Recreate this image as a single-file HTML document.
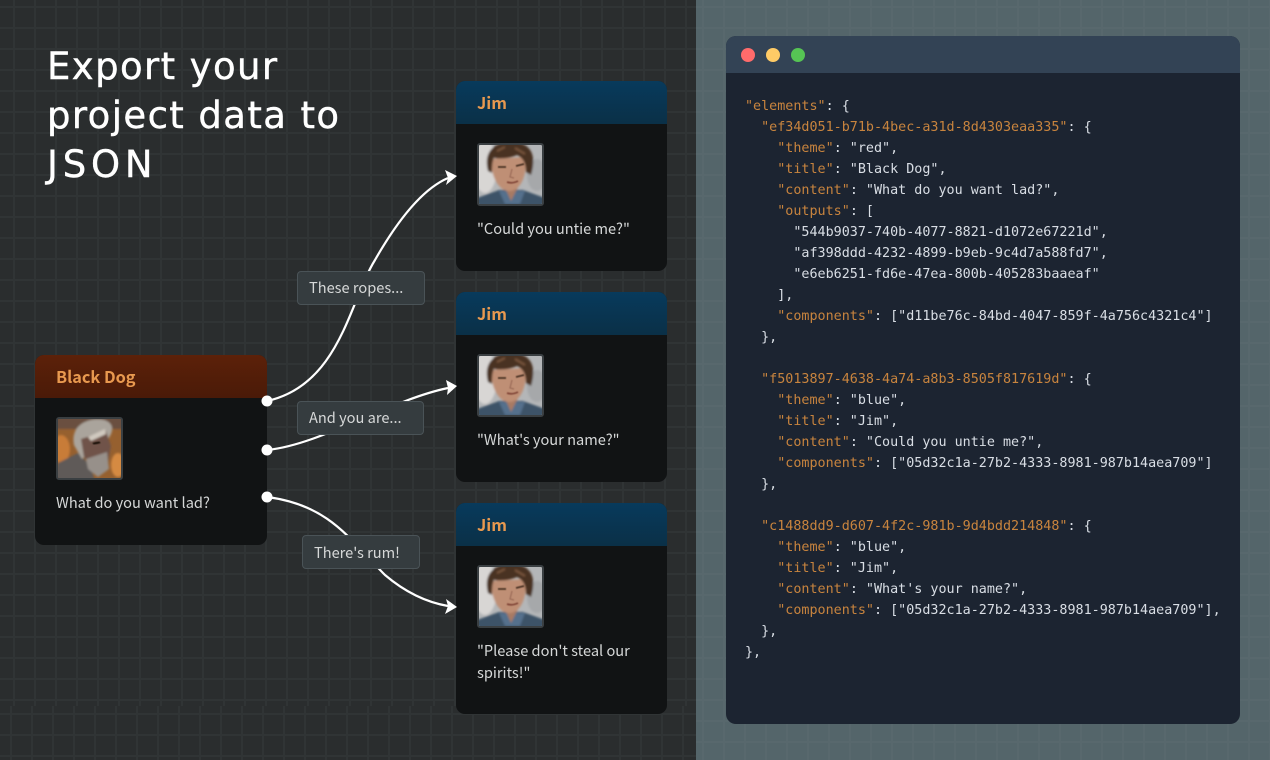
<!DOCTYPE html>
<html><head><meta charset="utf-8"><style>
*{box-sizing:border-box}
html,body{margin:0;padding:0}
body{width:1270px;height:760px;overflow:hidden;position:relative;background:#282b2c;font-family:"Noto Sans CJK SC","Liberation Sans",sans-serif}
.abs{position:absolute}
#left{left:0;top:0;width:696px;height:760px;background-color:#2a2d2e;
background-image:linear-gradient(to right,#303435 2px,transparent 2px),linear-gradient(to bottom,#303435 2px,transparent 2px);
background-size:21px 21px;background-position:13px 6px}
#left2{left:0;top:706px;width:696px;height:54px;background-color:#2a2d2e;
background-image:linear-gradient(to right,#303435 2px,transparent 2px),linear-gradient(to bottom,#303435 2px,transparent 2px);
background-size:21px 21px;background-position:10px 7px}
#right{left:696px;top:0;width:574px;height:760px;background-color:#54656a;
background-image:linear-gradient(to right,#58686d 2px,transparent 2px),linear-gradient(to bottom,#58686d 2px,transparent 2px);
background-size:21px 21px;background-position:6px 6px}
h1{position:absolute;left:47px;top:42px;margin:0;color:#fff;font:400 37px/49px "DejaVu Sans",sans-serif;letter-spacing:1.4px;-webkit-text-stroke:.4px #fff}
h1 span{letter-spacing:4.8px}
.node{position:absolute;width:211px;background:#111314;border-radius:9px;overflow:hidden}
.hd{height:43px;padding:9px 21px 0;font-size:16.3px;font-weight:700;color:#e8994f;line-height:24px}
.blue{background:linear-gradient(#083a5c,#0a3047)}
.red{background:linear-gradient(#5c2109,#4a1a08)}
.txt{position:absolute;left:21px;color:#d6d8d8;font-size:14.6px;line-height:22px}
.av{position:absolute;left:21px;width:67px;height:63px;border:2px solid #3a3f42;border-radius:3px;overflow:hidden}
.av svg{display:block}
.lbl{position:absolute;height:34px;background:#353c3f;border:1px solid #4a5357;border-radius:4px;color:#d6d8d8;font-size:14.6px;line-height:31px;padding-left:11px}
#win{left:726px;top:36px;width:514px;height:688px;background:#1c2431;border-radius:10px;overflow:hidden}
#bar{height:37px;background:#334355}
.dot{position:absolute;top:12px;width:14px;height:14px;border-radius:50%}
pre{position:absolute;left:19px;top:60px;margin:0;font:13.4px/21px "DejaVu Sans Mono","Liberation Mono",monospace;color:#d9dee5}
pre b{font-weight:400;color:#c8843e}
</style></head><body>
<div class="abs" id="left"></div>
<div class="abs" id="left2"></div>
<div class="abs" id="right"></div>
<h1>Export your<br>project data to<br><span>JSON</span></h1>

<svg width="0" height="0" style="position:absolute"><defs>
<filter id="b" x="-20%" y="-20%" width="140%" height="140%"><feGaussianBlur stdDeviation="1.1"/></filter>
<filter id="c" x="-20%" y="-20%" width="140%" height="140%"><feGaussianBlur stdDeviation=".5"/></filter>
<symbol id="jim" viewBox="0 0 63 59">
<rect width="63" height="59" fill="#b4b6b8"/>
<g filter="url(#b)">
<ellipse cx="6" cy="22" rx="12" ry="26" fill="#d8d6d4"/>
<ellipse cx="58" cy="30" rx="10" ry="16" fill="#a6a8aa"/>
<path d="M-4 63L-2 53L20 45H44L66 53V63Z" fill="#3d5267"/>
<path d="M20 46L26 59H41L46 46Z" fill="#54708c"/>
<path d="M24 38L32 56L41 38Z" fill="#a87a64"/>
<path d="M12 14C12 34 21 46 30 46C42 46 48 30 47 12Z" fill="#bf8f74"/>
<path d="M9 26C4 6 16-3 32-3C52-3 58 10 52 30L47 27C47 20 45 13 38 10C30 14 20 14 15 13C13 17 13 22 13 28Z" fill="#4a3123"/>
<path d="M18 6L26 2M36 3L46 9" stroke="#7a573d" stroke-width="2" fill="none"/>
</g>
<g filter="url(#c)">
<path d="M19 22L27 22M37 21L45 19" stroke="#4d3426" stroke-width="1.8" fill="none"/>
<path d="M28 37Q33 39 39 36" stroke="#84493a" stroke-width="1.8" fill="none"/>
<path d="M33 24L31 32L35 33" stroke="#9c6c58" stroke-width="1.2" fill="none"/>
</g></symbol>
<symbol id="dog" viewBox="0 0 63 59">
<rect width="63" height="59" fill="#96602f"/>
<g filter="url(#b)">
<ellipse cx="3" cy="30" rx="9" ry="14" fill="#c87c38"/>
<ellipse cx="60" cy="46" rx="7" ry="12" fill="#d58a42"/>
<rect x="-3" y="-3" width="70" height="13" fill="#6b5040"/>
<path d="M-3 62L0 44L20 34L32 46L37 62Z" fill="#5f5a59"/>
<path d="M16 26C12 6 30-2 46 1C56 4 56 12 50 20L24 40Z" fill="#aaa49c"/>
<path d="M23 20L48 12L53 27L50 44L36 50L26 38Z" fill="#6f5348"/>
<path d="M28 40L49 33L51 50L40 58L30 50Z" fill="#97908a"/>
<path d="M30 18L47 10L48 15L33 22Z" fill="#d0c9bf"/>
</g>
<path d="M35 25l7-2" stroke="#20150f" stroke-width="2.5" filter="url(#c)"/>
</symbol>
</defs></svg>

<div class="node" style="left:35px;top:355px;width:232px;height:190px"><div class="hd red">Black Dog</div>
<div class="av" style="top:62px"><svg width="63" height="59"><use href="#dog"/></svg></div>
<div class="txt" style="top:137px">What do you want lad?</div></div>

<div class="node" style="left:456px;top:81px;height:190px"><div class="hd blue">Jim</div>
<div class="av" style="top:62px"><svg width="63" height="59"><use href="#jim"/></svg></div>
<div class="txt" style="top:137px">"Could you untie me?"</div></div>

<div class="node" style="left:456px;top:292px;height:190px"><div class="hd blue">Jim</div>
<div class="av" style="top:62px"><svg width="63" height="59"><use href="#jim"/></svg></div>
<div class="txt" style="top:137px">"What's your name?"</div></div>

<div class="node" style="left:456px;top:503px;height:211px"><div class="hd blue">Jim</div>
<div class="av" style="top:62px"><svg width="63" height="59"><use href="#jim"/></svg></div>
<div class="txt" style="top:137px">"Please don't steal our<br>spirits!"</div></div>

<svg class="abs" style="left:0;top:0" width="696" height="760" fill="none" stroke="#fff" stroke-width="2.2">
<path d="M267 401C340 385 350 300 375 260C395 225 420 190 448 178"/>
<path d="M267 450C320 445 390 400 448 388"/>
<path d="M267 497C330 505 350 540 385 575C405 592 425 602 448 606"/>
<g fill="#fff" stroke="none">
<path d="M457 176L445 170L448 178L446 185Z"/>
<path d="M457 386L446 380L448 388L447 395Z"/>
<path d="M457 607L446 599L448 606L445 614Z"/>
<circle cx="267" cy="401" r="5.5"/><circle cx="267" cy="450" r="5.5"/><circle cx="267" cy="497" r="5.5"/>
</g></svg>

<div class="lbl" style="left:297px;top:271px;width:128px">These ropes...</div>
<div class="lbl" style="left:297px;top:401px;width:127px">And you are...</div>
<div class="lbl" style="left:302px;top:535px;width:118px;line-height:33px">There's rum!</div>

<div class="abs" id="win"><div id="bar">
<div class="dot" style="left:15px;background:#ff6b6b"></div>
<div class="dot" style="left:40px;background:#ffcb66"></div>
<div class="dot" style="left:65px;background:#56c454"></div></div>
<pre><b>"elements"</b>: {
  <b>"ef34d051-b71b-4bec-a31d-8d4303eaa335"</b>: {
    <b>"theme"</b>: "red",
    <b>"title"</b>: "Black Dog",
    <b>"content"</b>: "What do you want lad?",
    <b>"outputs"</b>: [
      "544b9037-740b-4077-8821-d1072e67221d",
      "af398ddd-4232-4899-b9eb-9c4d7a588fd7",
      "e6eb6251-fd6e-47ea-800b-405283baaeaf"
    ],
    <b>"components"</b>: ["d11be76c-84bd-4047-859f-4a756c4321c4"]
  },

  <b>"f5013897-4638-4a74-a8b3-8505f817619d"</b>: {
    <b>"theme"</b>: "blue",
    <b>"title"</b>: "Jim",
    <b>"content"</b>: "Could you untie me?",
    <b>"components"</b>: ["05d32c1a-27b2-4333-8981-987b14aea709"]
  },

  <b>"c1488dd9-d607-4f2c-981b-9d4bdd214848"</b>: {
    <b>"theme"</b>: "blue",
    <b>"title"</b>: "Jim",
    <b>"content"</b>: "What's your name?",
    <b>"components"</b>: ["05d32c1a-27b2-4333-8981-987b14aea709"],
  },
},</pre></div>
</body></html>
